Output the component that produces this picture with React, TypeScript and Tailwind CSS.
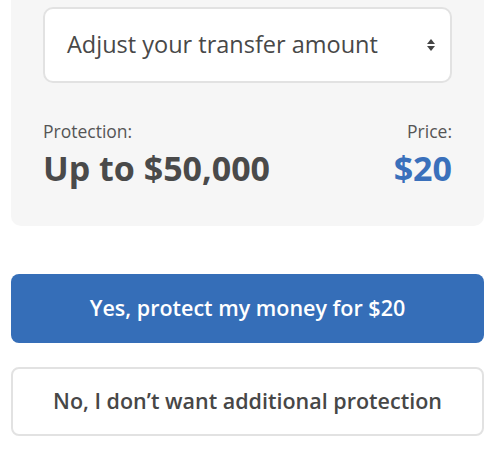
import React from "react";

export default function App() {
  return (
    <div className="w-[500px] h-[468px] bg-white overflow-hidden" style={{ fontFamily: '"Open Sans", "Noto Sans", sans-serif' }}>
      <div className="ml-[11px] mr-[16px] bg-[#f6f6f6] rounded-b-[10px] px-[32px] pt-[7px] pb-[36px]">
        <div className="h-[76px] bg-white border-2 border-[#e2e2e2] rounded-[10px] flex items-center justify-between pl-[22px] pr-[14px]">
          <span className="text-[23.5px] text-[#484848]">Adjust your transfer amount</span>
          <svg width="10" height="16" viewBox="0 0 10 16" className="text-[#444]">
            <path d="M5 2 L9 7 L1 7 Z" fill="currentColor" />
            <path d="M5 14 L9 9 L1 9 Z" fill="currentColor" />
          </svg>
        </div>
        <div className="flex justify-between mt-[36px]">
          <div className="flex flex-col">
            <span className="text-[17.5px] leading-[24px] text-[#555]">Protection:</span>
            <span className="text-[34px] leading-[44px] font-bold text-[#4a4a4a] mt-[3px]">Up to $50,000</span>
          </div>
          <div className="flex flex-col items-end">
            <span className="text-[17.5px] leading-[24px] text-[#555]">Price:</span>
            <span className="text-[34px] leading-[44px] font-bold text-[#3a70bb] mt-[3px]">$20</span>
          </div>
        </div>
      </div>
      <div className="ml-[11px] mr-[16px] mt-[48px] flex flex-col gap-[24px]">
        <button className="h-[69px] w-full rounded-[8px] bg-[#356eb8] text-white text-[21.5px] font-semibold">
          Yes, protect my money for $20
        </button>
        <button className="h-[69px] w-full rounded-[8px] bg-white border-2 border-[#e2e2e2] text-[#474747] text-[21.5px] font-semibold">
          No, I don’t want additional protection
        </button>
      </div>
    </div>
  );
}
